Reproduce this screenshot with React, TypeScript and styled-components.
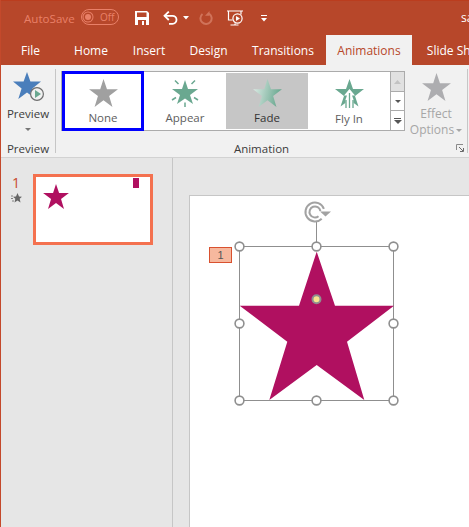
import React from 'react';
import styled, { createGlobalStyle } from 'styled-components';

const GlobalStyle = createGlobalStyle`
  html, body {
    margin: 0;
    padding: 0;
    height: 100%;
    overflow: hidden;
    background: #e6e6e6;
  }
  #root {
    height: 100%;
  }
`;

const Window = styled.div`
  width: 469px;
  height: 527px;
  display: flex;
  flex-direction: column;
  overflow: hidden;
  box-sizing: border-box;
  border-left: 1px solid #c4492b;
  font-family: "Open Sans", "Noto Sans", sans-serif;
  font-size: 12px;
`;

const TitleBar = styled.div`
  height: 35px;
  flex: none;
  margin-left: -1px;
  display: flex;
  align-items: center;
  background: #b7472a;
  border-top: 1px solid #bb3d1e;
  box-sizing: border-box;
  padding-left: 24px;
  position: relative;
`;

const AutoSave = styled.span`
  color: #e98068;
  font-size: 11.6px;
  width: 57px;
  flex: none;
`;

const Toggle = styled.div`
  width: 38px;
  height: 16px;
  flex: none;
  box-sizing: border-box;
  border: 1px solid #e98068;
  border-radius: 8px;
  display: flex;
  align-items: center;
  padding-left: 3px;
  gap: 9px;
  color: #e98068;
  font-size: 10px;
  margin: -2px 16px 0 0;
`;

const ToggleDot = styled.i`
  width: 6px;
  height: 6px;
  flex: none;
  border-radius: 50%;
  background: #e98068;
  box-shadow: 0 0 0 1.5px #b7472a, 0 0 0 2.5px #e98068;
`;

const QuickIcon = styled.svg<{ $gap?: number }>`
  flex: none;
  display: block;
  margin-right: ${(p) => p.$gap ?? 0}px;
`;

const FileName = styled.span`
  position: absolute;
  left: 461px;
  top: 8px;
  color: #fff;
  font-size: 12px;
`;

const TabBar = styled.div`
  height: 30px;
  flex: none;
  margin-left: -1px;
  display: flex;
  background: #b7472a;
  white-space: nowrap;
`;

const Tab = styled.div<{ $active?: boolean; $w: number }>`
  width: ${(p) => p.$w}px;
  flex: none;
  display: flex;
  justify-content: center;
  align-items: center;
  box-sizing: border-box;
  color: ${(p) => (p.$active ? '#b7472a' : '#fff')};
  background: ${(p) => (p.$active ? '#f1f1f1' : 'transparent')};
`;

const Ribbon = styled.div`
  height: 93px;
  flex: none;
  display: flex;
  background: #f1f1f1;
  border-bottom: 1px solid #d2d2d2;
  box-sizing: border-box;
`;

const Group = styled.div<{ $w: number }>`
  width: ${(p) => p.$w}px;
  flex: none;
  box-sizing: border-box;
  margin-top: 4px;
  height: 84px;
  border-right: 1px solid #c6c6c6;
  display: flex;
  flex-direction: column;
  position: relative;
`;

const GroupBody = styled.div`
  height: 71px;
  flex: none;
  display: flex;
`;

const GroupLabel = styled.div`
  height: 16px;
  flex: none;
  display: flex;
  align-items: center;
  justify-content: center;
  font-size: 11.5px;
  color: #3c3c3c;
`;

const PreviewButton = styled.div`
  width: 100%;
  padding-top: 1px;
  display: flex;
  flex-direction: column;
  align-items: center;
  color: #3c3c3c;
`;

const PreviewIcon = styled.svg`
  display: block;
  margin-left: 4px;
`;

const PreviewText = styled.div`
  font-size: 11.5px;
  line-height: 16px;
  margin: 5px 0 6px;
`;

const Caret = styled.i<{ $color?: string; $size?: number }>`
  display: block;
  width: 0;
  height: 0;
  border-left: ${(p) => p.$size ?? 3}px solid transparent;
  border-right: ${(p) => p.$size ?? 3}px solid transparent;
  border-top: ${(p) => p.$size ?? 3}px solid ${(p) => p.$color ?? '#777'};
`;

const Gallery = styled.div`
  margin: 2px 0 0 5px;
  display: flex;
  flex: none;
  height: 60px;
`;

const GalleryItems = styled.div`
  box-sizing: border-box;
  width: 330px;
  height: 60px;
  border: 1px solid #ababab;
  background: #fff;
  display: flex;
`;

const GalleryItem = styled.div<{ $selected?: boolean; $focused?: boolean }>`
  width: 82px;
  flex: none;
  box-sizing: border-box;
  display: flex;
  flex-direction: column;
  align-items: center;
  margin: ${(p) => (p.$focused ? '-1px 0' : '1px 0')};
  padding-top: ${(p) => (p.$focused ? '5px' : '6px')};
  background: ${(p) => (p.$selected ? '#c6c6c6' : 'transparent')};
  border: ${(p) => (p.$focused ? '3px solid #0000ff' : 'none')};
  color: ${(p) => (p.$selected ? '#333' : '#5e5e5e')};
  font-size: 11.5px;
  line-height: 16px;
`;

const GalleryIcon = styled.svg`
  display: block;
  flex: none;
`;

const GalleryCaption = styled.div`
  margin-top: 3px;
`;

const GalleryScroll = styled.div`
  width: 14px;
  display: flex;
  flex-direction: column;
  flex: none;
`;

const ScrollButton = styled.div<{ $disabled?: boolean; $h: number }>`
  height: ${(p) => p.$h}px;
  box-sizing: border-box;
  border: 1px solid #ababab;
  border-left: none;
  border-top: ${(p) => (p.$disabled ? '1px solid #ababab' : 'none')};
  background: ${(p) => (p.$disabled ? '#e1e1e1' : '#fff')};
  display: flex;
  flex-direction: column;
  gap: 1px;
  align-items: center;
  justify-content: center;
`;

const Bar = styled.i`
  display: block;
  width: 7px;
  height: 1px;
  background: #555;
`;

const EffectOptions = styled.div`
  width: 62px;
  flex: none;
  display: flex;
  flex-direction: column;
  align-items: center;
  color: #a6a6a6;
  font-size: 12px;
  line-height: 16px;
  padding-top: 4px;
  text-align: center;
`;

const EffectText = styled.div`
  margin-top: 5px;
`;

const OptionsRow = styled.div`
  display: flex;
  align-items: center;
  gap: 2px;
`;

const Launcher = styled.svg`
  position: absolute;
  right: 3px;
  bottom: 1px;
`;

const Workspace = styled.div`
  flex: 1;
  display: flex;
  min-height: 0;
`;

const Sidebar = styled.div`
  width: 172px;
  flex: none;
  box-sizing: border-box;
  border-right: 1px solid #c6c6c6;
  padding: 16px 0 0 6px;
  display: flex;
  background: #e6e6e6;
`;

const ThumbMeta = styled.div`
  width: 18px;
  flex: none;
  display: flex;
  flex-direction: column;
  align-items: center;
  color: #c8492b;
  font-size: 14px;
  line-height: 18px;
`;

const ThumbStarMark = styled.svg`
  display: block;
  margin-top: 1px;
`;

const Thumbnail = styled.div`
  width: 120px;
  height: 71px;
  box-sizing: border-box;
  border: 3px solid #f4714f;
  background: #fff;
  position: relative;
  margin-left: 8px;
`;

const ThumbBadge = styled.i`
  position: absolute;
  right: 11px;
  top: 1px;
  width: 6px;
  height: 10px;
  background: #b01060;
`;

const ThumbStar = styled.svg`
  position: absolute;
  left: 7px;
  top: 7px;
`;

const Stage = styled.div`
  flex: 1;
  padding: 37px 0 0 16px;
  background: #e6e6e6;
  overflow: hidden;
`;

const Slide = styled.div`
  width: 400px;
  height: 400px;
  background: #fff;
  border: 1px solid #c6c6c6;
  box-sizing: border-box;
  position: relative;
`;

const ShapeLayer = styled.svg`
  position: absolute;
  left: 39px;
  top: 0;
`;

const AnimTag = styled.div`
  position: absolute;
  left: 19px;
  top: 51px;
  width: 23px;
  height: 16px;
  box-sizing: border-box;
  background: #f6b89e;
  border: 1px solid #d9512f;
  color: #555;
  font-family: "Liberation Sans", sans-serif;
  font-size: 11px;
  line-height: 14px;
  text-align: center;
`;

const STAR = '77,0 95.5,54 154,54 107,90 124.7,148.5 77,113.5 29.5,148.5 47.5,90 0,54 59.5,54';

const Star = ({ size, fill }: { size: number; fill: string }) => (
  <GalleryIcon width={size} height={Math.round((size * 149) / 154)} viewBox="0 0 154 149">
    <polygon points={STAR} fill={fill} />
  </GalleryIcon>
);

const Handle = ({ x, y }: { x: number; y: number }) => (
  <circle cx={x} cy={y} r="4.4" fill="#fff" stroke="#8f8f8f" strokeWidth="1.6" />
);

const HANDLES: [number, number][] = [
  [10.5, 50.5], [87.5, 50.5], [164.5, 50.5],
  [10.5, 127.5], [164.5, 127.5],
  [10.5, 204.5], [87.5, 204.5], [164.5, 204.5],
];

export default function App() {
  return (
    <>
      <GlobalStyle />
      <Window>
        <TitleBar>
          <AutoSave>AutoSave</AutoSave>
          <Toggle>
            <ToggleDot />
            Off
          </Toggle>
          <QuickIcon $gap={14} width="14" height="14" viewBox="0 0 14 14">
            <path d="M0 0h12l2 2v12H0z" fill="#fff" />
            <path d="M2 1.5h9.5v4.5H2z" fill="#b7472a" />
            <path d="M3 9h8v5H3z" fill="#b7472a" />
            <path d="M7 10h2v4H7z" fill="#fff" />
          </QuickIcon>
          <QuickIcon $gap={5} width="15" height="14" viewBox="0 0 15 14">
            <path d="M1.5 4.8h8a4 4 0 0 1 0 8H6" fill="none" stroke="#fff" strokeWidth="1.8" />
            <path d="M5.8 0.6L1.5 4.8 5.8 9" fill="none" stroke="#fff" strokeWidth="1.8" />
          </QuickIcon>
          <QuickIcon $gap={10} width="6" height="4" viewBox="0 0 6 4">
            <path d="M0 0h6L3 3.5z" fill="#fff" />
          </QuickIcon>
          <QuickIcon $gap={14} width="14" height="14" viewBox="0 0 14 14">
            <path d="M3.5 3a5.6 5.6 0 1 0 6.5-.4" fill="none" stroke="#d0735a" strokeWidth="2" />
            <path d="M10.5 0v4.8H6z" fill="#d0735a" />
          </QuickIcon>
          <QuickIcon $gap={18} width="16" height="16" viewBox="0 0 16 16">
            <path d="M0 1h16M1.5 1.5v8.5h4M14 1.5v3M3.5 15h8M8 13.5V15" fill="none" stroke="#fff" strokeWidth="1.2" />
            <circle cx="10.5" cy="8.5" r="4.6" fill="none" stroke="#fff" strokeWidth="1.2" />
            <path d="M9 6l4 2.5L9 11z" fill="#fff" />
          </QuickIcon>
          <QuickIcon width="6" height="7" viewBox="0 0 6 7">
            <path d="M0 0.5h6" stroke="#fff" strokeWidth="1" />
            <path d="M0 3h6L3 6.5z" fill="#fff" />
          </QuickIcon>
          <FileName>sa</FileName>
        </TitleBar>
        <TabBar>
          <Tab $w={61}>File</Tab>
          <Tab $w={60}>Home</Tab>
          <Tab $w={56}>Insert</Tab>
          <Tab $w={63}>Design</Tab>
          <Tab $w={86}>Transitions</Tab>
          <Tab $w={86} $active>Animations</Tab>
          <Tab $w={90}>Slide Show</Tab>
        </TabBar>
        <Ribbon>
          <Group $w={55}>
            <GroupBody>
              <PreviewButton>
                <PreviewIcon width="34" height="31" viewBox="0 0 34 31">
                  <polygon points="14,2 17.4,11.5 28,11.5 19.4,18.5 22.7,29 14,22.5 5.3,29 8.6,18.5 0,11.5 10.6,11.5" fill="#4a7ebb" />
                  <circle cx="24" cy="24" r="6.4" fill="#f1f1f1" stroke="#6e6e6e" strokeWidth="1.2" />
                  <path d="M22 20l6 4-6 4z" fill="#6aa890" />
                </PreviewIcon>
                <PreviewText>Preview</PreviewText>
                <Caret />
              </PreviewButton>
            </GroupBody>
            <GroupLabel>Preview</GroupLabel>
          </Group>
          <Group $w={412}>
            <GroupBody>
              <Gallery>
                <GalleryItems>
                  <GalleryItem $focused>
                    <Star size={29} fill="#a0a0a0" />
                    <GalleryCaption>None</GalleryCaption>
                  </GalleryItem>
                  <GalleryItem>
                    <GalleryIcon width="28" height="28" viewBox="0 0 28 28">
                      <polygon points="14,1 17,10 27,10 19,16 22,25 14,19.5 6,25 9,16 1,10 11,10" fill="#6aa890" />
                      <path d="M4 1.5l3.5 3.5M24 1.5l-3.5 3.5M1 21l4-2.5M27 21l-4-2.5M14 23v5" stroke="#fff" strokeWidth="3" />
                      <path d="M4 1.5l3.5 3.5M24 1.5l-3.5 3.5M1 21l4-2.5M27 21l-4-2.5M14 23.5v4.5" stroke="#6aa890" strokeWidth="1.5" />
                    </GalleryIcon>
                    <GalleryCaption>Appear</GalleryCaption>
                  </GalleryItem>
                  <GalleryItem $selected>
                    <GalleryIcon width="29" height="28" viewBox="0 0 154 149">
                      <defs>
                        <linearGradient id="fade" x1="0" y1="0" x2="1" y2="0.2">
                          <stop offset="0" stopColor="#e3efea" />
                          <stop offset="1" stopColor="#6aa890" />
                        </linearGradient>
                      </defs>
                      <polygon points={STAR} fill="url(#fade)" />
                    </GalleryIcon>
                    <GalleryCaption>Fade</GalleryCaption>
                  </GalleryItem>
                  <GalleryItem>
                    <GalleryIcon width="29" height="29" viewBox="0 0 29 29">
                      <polygon points="14.5,0 18,10 29,10 20,17 23.5,27.5 14.5,21 5.5,27.5 9,17 0,10 11,10" fill="#6aa890" />
                      <path d="M14.5 10l5.5 6.5h-3l1.5 4v8.5H10.5V20.5l1.5-4H9z" fill="#fff" />
                      <path d="M14.5 14v15M11 21v8M18 21v8" stroke="#6aa890" strokeWidth="1.3" />
                    </GalleryIcon>
                    <GalleryCaption>Fly In</GalleryCaption>
                  </GalleryItem>
                </GalleryItems>
                <GalleryScroll>
                  <ScrollButton $disabled $h={21}>
                    <svg width="7" height="4" viewBox="0 0 7 4"><path d="M0 4h7L3.5 0z" fill="#c2c2c2" /></svg>
                  </ScrollButton>
                  <ScrollButton $h={19}>
                    <Caret $color="#555" />
                  </ScrollButton>
                  <ScrollButton $h={20}>
                    <Bar />
                    <Caret $color="#555" $size={4} />
                  </ScrollButton>
                </GalleryScroll>
              </Gallery>
              <EffectOptions>
                <Star size={29} fill="#adadb0" />
                <EffectText>Effect</EffectText>
                <OptionsRow>
                  Options
                  <Caret $color="#a6a6a6" />
                </OptionsRow>
              </EffectOptions>
            </GroupBody>
            <GroupLabel>Animation</GroupLabel>
            <Launcher width="8" height="8" viewBox="0 0 8 8">
              <path d="M0.5 6V0.5H7" fill="none" stroke="#8a8a8a" />
              <path d="M3 3l4 4M7.5 4v3.5H4" fill="none" stroke="#6a6a6a" />
            </Launcher>
          </Group>
        </Ribbon>
        <Workspace>
          <Sidebar>
            <ThumbMeta>
              1
              <ThumbStarMark width="11" height="10" viewBox="0 0 11 10">
                <polygon points="6.5,0 8,3.5 11,3.7 8.7,5.8 9.5,9.5 6.5,7.5 3.5,9.5 4.3,5.8 2,3.7 5,3.5" fill="#666" />
                <path d="M0 3h2M0 5.5h2M1 8h2" stroke="#666" strokeWidth="0.8" />
              </ThumbStarMark>
            </ThumbMeta>
            <Thumbnail>
              <ThumbStar width="26" height="25" viewBox="0 0 154 149">
                <polygon points={STAR} fill="#b01060" />
              </ThumbStar>
              <ThumbBadge />
            </Thumbnail>
          </Sidebar>
          <Stage>
            <Slide>
              <ShapeLayer width="180" height="216" viewBox="0 0 180 216">
                <rect x="10.5" y="50.5" width="154" height="154" fill="none" stroke="#8f8f8f" />
                <path d="M87.5 25v25" stroke="#8f8f8f" />
                <polygon
                  points="87.7,55.7 106,109.7 165,109.7 118,145.7 135.3,204 87.7,169 40.3,204 58.3,145.7 10.7,109.7 70,109.7"
                  fill="#b01060"
                />
                <circle cx="87.5" cy="103.3" r="4" fill="#f8e58e" stroke="#8f8f8f" strokeWidth="2" />
                {HANDLES.map(([x, y]) => (
                  <Handle key={`${x}-${y}`} x={x} y={y} />
                ))}
                <path d="M92.7 22.7A9.5 9.5 0 1 1 94.9 12.8" fill="none" stroke="#a2a2a2" strokeWidth="2" />
                <path d="M89.5 20.2A5.5 5.5 0 1 1 91.4 15" fill="none" stroke="#a2a2a2" strokeWidth="2" />
                <path d="M91 15.5h11l-5.500 5z" fill="#a2a2a2" />
              </ShapeLayer>
              <AnimTag>1</AnimTag>
            </Slide>
          </Stage>
        </Workspace>
      </Window>
    </>
  );
}
